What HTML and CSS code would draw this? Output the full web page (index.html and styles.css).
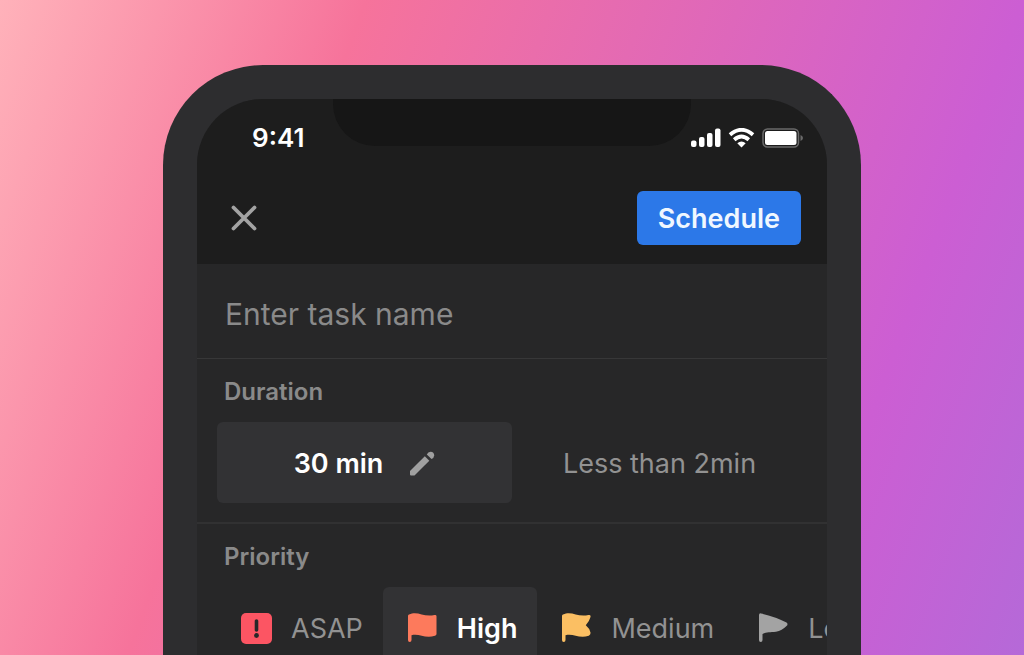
FILE: index.html
```html
<!DOCTYPE html>
<html lang="en">
<head>
    <meta charset="UTF-8">
    <meta name="viewport" content="width=device-width, initial-scale=1.0">
    <title>New Task</title>
    <link rel="stylesheet" href="styles.css">
</head>
<body>
    <div class="stage">
        <div class="phone">
            <div class="notch"></div>

            <header class="header">
                <div class="status-bar">
                    <span class="time">9:41</span>
                    <div class="status-icons">
                        <svg width="30" height="20" viewBox="0 0 30 20" fill="#fff">
                            <rect x="0" y="12.500" width="5.500" height="6.500" rx="2"/>
                            <rect x="8" y="9" width="5.500" height="10" rx="2"/>
                            <rect x="16" y="5" width="5.500" height="14" rx="2"/>
                            <rect x="24" y="0.500" width="5.500" height="18.500" rx="2"/>
                        </svg>
                        <svg width="27" height="20" viewBox="0 0 27 20">
                            <path d="M2 6.800Q13.500 -3.200 25 6.800M6.200 11.800Q13.500 5.400 20.800 11.800" fill="none" stroke="#fff" stroke-width="3.800"/>
                            <path d="M9.300 15.200Q13.500 11.600 17.700 15.200L13.500 19.400Z" fill="#fff"/>
                        </svg>
                        <svg width="41" height="20" viewBox="0 0 41 20">
                            <rect x="1" y="1" width="35.500" height="18" rx="4.500" fill="none" stroke="#6a6a6a" stroke-width="1.500"/>
                            <rect x="3" y="3" width="31.500" height="14" rx="2.500" fill="#fff"/>
                            <path d="M38.500 7Q41 8 41 10T38.500 13Z" fill="#6a6a6a"/>
                        </svg>
                    </div>
                </div>
                <div class="nav">
                    <button class="close-button" aria-label="Close">
                        <svg width="26" height="26" viewBox="0 0 26 26" fill="none" stroke="#a3a3a3" stroke-width="3.800" stroke-linecap="round">
                            <path d="M2.500 2.500L23.500 23.500M23.500 2.500L2.500 23.500"/>
                        </svg>
                    </button>
                    <button class="schedule-button">Schedule</button>
                </div>
            </header>

            <input class="task-name" type="text" placeholder="Enter task name" aria-label="Task name">

            <section class="section">
                <h2>Duration</h2>
                <div class="durations">
                    <button class="option active">
                        30 min
                        <svg width="26" height="26" viewBox="0 0 26 26" fill="#a0a0a0">
                            <path d="M1 20L15.800 5.200L20.300 9.700L5.500 24.500H2Q1 24.500 1 23.500Z"/>
                            <path d="M17.800 3.400Q19 0.800 21.500 0.800Q25.200 1 25.200 4.500Q25 7 22.500 8.100Z"/>
                        </svg>
                    </button>
                    <button class="option">Less than 2min</button>
                </div>
            </section>

            <section class="section">
                <h2>Priority</h2>
                <div class="priorities">
                    <button class="option">
                        <svg width="31" height="32" viewBox="0 0 31 32">
                            <rect x="0" y="0" width="31" height="31" rx="5" fill="#fc5563"/>
                            <path d="M15.500 8V17" stroke="#272728" stroke-width="3.600" stroke-linecap="round"/>
                            <circle cx="15.500" cy="22.500" r="2.400" fill="#272728"/>
                        </svg>
                        ASAP
                    </button>
                    <button class="option active">
                        <svg width="31" height="32" viewBox="0 1 31 32" fill="#fd7a5c">
                            <path d="M1 4Q1 2.900 2 2.500C11 -1.500 16 5.500 27.500 3Q29.500 2.700 29.500 4.200V22Q29.500 23.200 28 23.700C18 27 12 21 4.500 23.300V28Q4.500 30 2.700 30Q1 30 1 28Z"/>
                        </svg>
                        High
                    </button>
                    <button class="option">
                        <svg width="31" height="32" viewBox="0 1 31 32" fill="#fbbf63">
                            <path d="M1 4Q1 2.900 2 2.500C11 -1.500 16 5.500 27.500 3Q30 2.600 29.500 5Q28.500 9 24.800 13.200Q28.500 16.200 29.500 20.500Q29.800 22.800 27.800 23.700C18 27 12 21 4.500 23.300V28Q4.500 30 2.700 30Q1 30 1 28Z"/>
                        </svg>
                        Medium
                    </button>
                    <button class="option">
                        <svg width="31" height="32" viewBox="0 1 31 32" fill="#a3a3a3">
                            <path d="M1 3Q1 1 3 1.400Q17 4.500 28.500 10.500Q30.500 12 28.500 14Q24 18.500 18 19.800C12 20.500 9 20 4.500 22V28Q4.500 30 2.700 30Q1 30 1 28Z"/>
                        </svg>
                        Low
                    </button>
                </div>
            </section>
        </div>
    </div>
</body>
</html>
```
FILE: styles.css
```css
* {
    box-sizing: border-box;
}
body {
    margin: 0;
    font-family: Inter, "Liberation Sans", sans-serif;
    color: #929292;
}
button, input {
    font-family: inherit;
    color: inherit;
    background: none;
    border: none;
    padding: 0;
}
button {
    cursor: pointer;
}
svg {
    display: block;
    flex-shrink: 0;
}
.stage {
    height: 100vh;
    overflow: hidden;
    padding: 65px 24px 0;
    background: linear-gradient(110deg, #ffb2ba 0%, #f6739b 29%, #cc5ed3 81%, #b569d8 100%);
}
.phone {
    position: relative;
    max-width: 698px;
    margin: 0 auto;
    background: #272728;
    border: 34px solid #2d2d2f;
    border-bottom: none;
    border-radius: 100px 100px 0 0;
    overflow: hidden;
}
/* Sits over the status bar */
.notch {
    position: absolute;
    top: 0;
    left: 50%;
    width: 358px;
    height: 47px;
    transform: translateX(-50%);
    background: #161616;
    border-radius: 0 0 42px 42px;
}
.header {
    background: #1d1d1d;
}
.status-bar {
    display: flex;
    align-items: center;
    justify-content: space-between;
    height: 77px;
    padding: 0 24px 0 55px;
}
.time {
    color: #fff;
    font-size: 26px;
    font-weight: 600;
}
.status-icons {
    display: flex;
    gap: 7px;
}
.nav {
    display: flex;
    align-items: center;
    justify-content: space-between;
    padding: 15px 26px 19px 34px;
}
.schedule-button {
    height: 54px;
    padding: 0 21px;
    background: #2c78e8;
    border-radius: 6px;
    color: #f0f7ff;
    font-size: 27px;
    font-weight: 600;
}
.task-name {
    display: block;
    width: 100%;
    height: 95px;
    padding: 6px 28px 0;
    border-bottom: 1px solid #373738;
    font-size: 30px;
    outline: none;
}
.task-name::placeholder {
    color: #8a8a8a;
    opacity: 1;
}
.section {
    padding: 19px 20px;
    border-bottom: 2px solid #313132;
}
.section h2 {
    margin: 0 0 16px;
    padding-left: 7px;
    color: #8a8a8a;
    font-size: 24px;
    font-weight: 600;
    line-height: 28px;
}
.durations, .priorities {
    display: flex;
}
.durations .option {
    flex: 1;
    justify-content: center;
    gap: 26px;
}
.option {
    display: flex;
    align-items: center;
    height: 81px;
    padding-top: 2px;
    border-radius: 6px;
    font-size: 27px;
    white-space: nowrap;
}
.option.active {
    background: #323234;
    color: #fff;
    font-weight: 600;
}
/* The row runs past the right edge of the screen */
.priorities .option {
    flex-shrink: 0;
    gap: 19px;
    padding: 2px 20px 0 24px;
}
```
